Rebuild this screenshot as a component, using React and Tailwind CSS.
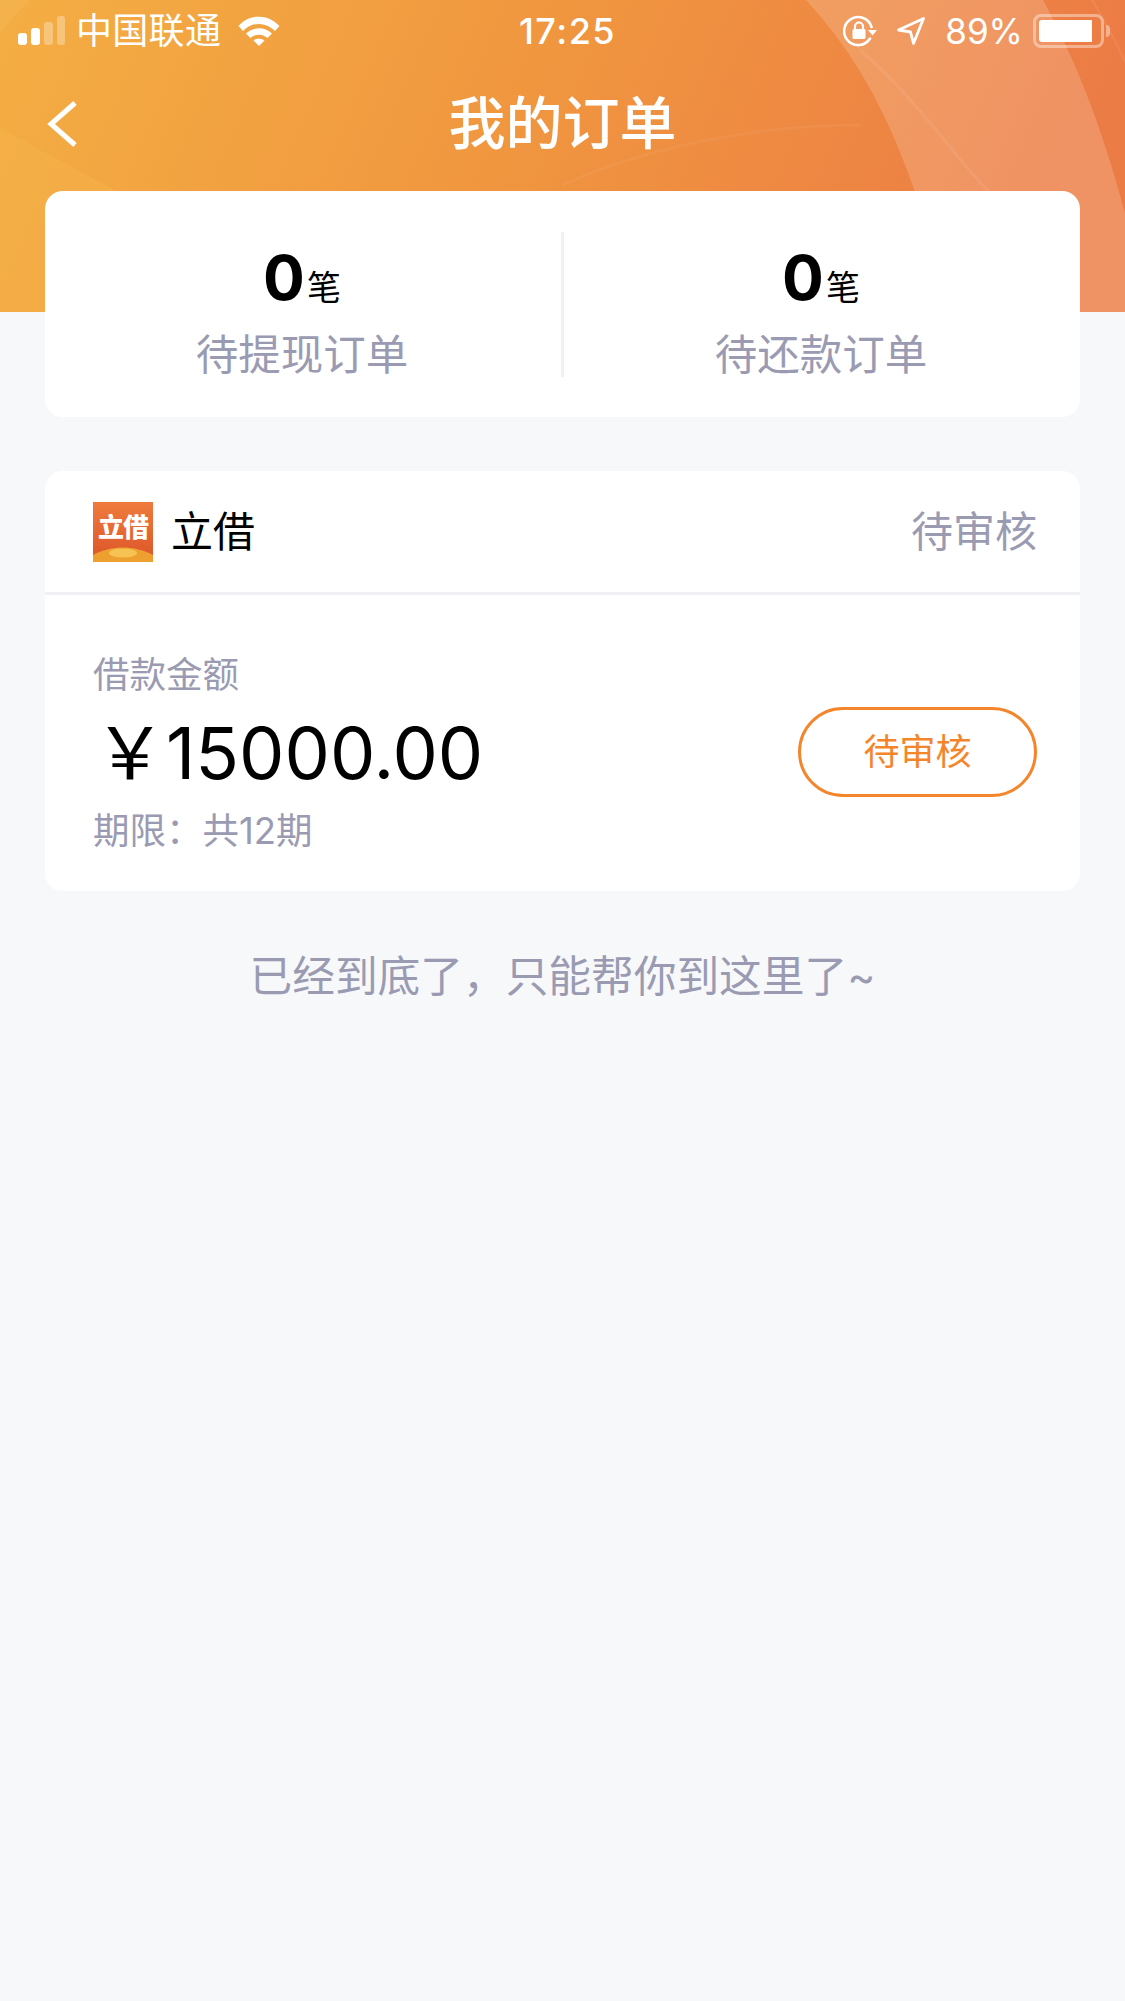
import React from 'react';

const FONT = "font-['Inter','Noto_Sans_CJK_SC',sans-serif]";

const HeaderArt = () => (
  <svg className="absolute inset-0 w-full h-full" viewBox="0 0 1125 312" preserveAspectRatio="none">
    <defs>
      <linearGradient id="hdr" x1="0" y1="0" x2="1" y2="0.12">
        <stop offset="0" stopColor="#f4ae43" />
        <stop offset="0.5" stopColor="#f0963f" />
        <stop offset="1" stopColor="#ec7c45" />
      </linearGradient>
    </defs>
    <rect width="1125" height="312" fill="url(#hdr)" />
    {/* left corner shapes */}
    <path d="M0 128 L118 192 L250 312 L0 312 Z" fill="#f7bb4e" fillOpacity="0.3" />
    <path d="M0 0 L30 0 L0 32 Z" fill="#ffffff" fillOpacity="0.05" />
    {/* big light band on the right */}
    <path d="M806 0 C860 60 905 130 950 312 L1125 312 L1125 213 C1100 120 1075 60 1043 0 Z" fill="#ffffff" fillOpacity="0.17" />
    <path d="M860 50 C930 110 975 190 1012 210" fill="none" stroke="#ffffff" strokeOpacity="0.07" strokeWidth="3" />
    <path d="M1092 0 C1105 20 1115 40 1125 62" fill="none" stroke="#ffffff" strokeOpacity="0.08" strokeWidth="2" />
    {/* thin line behind the title */}
    <path d="M562 185 C640 150 750 125 860 125" fill="none" stroke="#ffffff" strokeOpacity="0.05" strokeWidth="3" />
  </svg>
);

const Signal = () => (
  <svg width="48" height="30" viewBox="0 0 48 30" className="shrink-0">
    <rect x="0" y="17" width="9" height="12" rx="3" fill="#fff" />
    <rect x="13" y="12" width="9" height="17" rx="3" fill="#fff" />
    <rect x="26" y="6" width="9" height="23" rx="3" fill="#fff" fillOpacity="0.3" />
    <rect x="39" y="0" width="8" height="29" rx="3" fill="#fff" fillOpacity="0.3" />
  </svg>
);

const Wifi = () => (
  <svg width="42" height="30" viewBox="0 0 42 30" className="shrink-0">
    <path d="M0.5 10 C12 -2.5 30 -2.5 41.5 10 L37 15 C27.5 5.5 14.5 5.5 5 15 Z" fill="#fff" />
    <path d="M8 17.5 C15.5 10.5 26.5 10.5 34 17.5 L29.5 22 C24.5 17.5 17.5 17.5 12.5 22 Z" fill="#fff" />
    <path d="M15.5 24.5 C18.5 22 23.5 22 26.5 24.5 L21 30 Z" fill="#fff" />
  </svg>
);

const RotationLock = () => (
  <svg width="34" height="32" viewBox="0 0 34 32" className="shrink-0">
    <path d="M27 23.5 A14 14 0 1 1 28.5 12" fill="none" stroke="#fff" strokeWidth="2.6" strokeLinecap="round" />
    <path d="M25 15 L34 15 L29.5 20.5 Z" fill="#fff" />
    <rect x="9.5" y="14" width="13" height="10" rx="1.5" fill="#fff" />
    <path d="M12 14 V11.5 A4 4 0 0 1 20 11.5 V14" fill="none" stroke="#fff" strokeWidth="2.2" />
  </svg>
);

const Arrow = () => (
  <svg width="28" height="28" viewBox="0 0 28 28" className="shrink-0">
    <path d="M26.5 1.5 L1.5 13 L13.5 15 L16.5 26.5 Z" fill="none" stroke="#fff" strokeWidth="2.8" strokeLinejoin="round" />
  </svg>
);

const Battery = () => (
  <div className="flex items-center gap-[2px]">
    <div className="w-[71px] h-[34px] rounded-[8px] border-[3px] border-white/40 p-[3px]">
      <div className="w-[53px] h-full bg-white rounded-l-[3px]" />
    </div>
    <div className="w-[4px] h-[12px] bg-white/40 rounded-r-full" />
  </div>
);

const Logo = () => (
  <div className="relative w-[60px] h-[60px] shrink-0 overflow-hidden bg-gradient-to-b from-[#ee7b3d] to-[#dd5329] flex justify-center">
    <span className="mt-[11px] text-[26px] leading-[30px] font-black text-white tracking-[-1px]">立借</span>
    <svg className="absolute left-0 bottom-0" width="60" height="16" viewBox="0 0 60 16">
      <path d="M0 16 V9 C18 -1 42 -1 60 9 V16 Z" fill="#eda02f" />
      <ellipse cx="30" cy="7" rx="14" ry="4.5" fill="#f6c252" />
    </svg>
  </div>
);

const Stat = ({ label }) => (
  <div className="flex-1 flex flex-col items-center pt-[22px] pr-[2px]">
    <div className="flex items-end h-[60px]">
      <span className="text-[62px] leading-[60px] font-bold text-black">0</span>
      <span className="text-[34px] leading-[40px] ml-[2px] text-black">笔</span>
    </div>
    <span className="mt-[19px] text-[42.5px] leading-[56px] text-[#9a9bb2]">{label}</span>
  </div>
);

export default function App() {
  return (
    <div className={`${FONT} min-h-[2001px] bg-[#f7f8fa]`}>
      <header className="relative h-[312px] overflow-hidden text-white">
        <HeaderArt />
        <div className="relative grid grid-cols-[1fr_auto_1fr] items-center h-[62px] pl-[18px] pr-[15px]">
          <div className="flex items-center">
            <Signal />
            <span className="ml-[10px] text-[36px] leading-[44px] tracking-[0.3px]">中国联通</span>
            <span className="ml-[17px]"><Wifi /></span>
          </div>
          <span className="ml-[7px] text-[36px] leading-[44px] font-medium tracking-[1.5px]">17:25</span>
          <div className="flex items-center justify-end">
            <RotationLock />
            <span className="ml-[20px]"><Arrow /></span>
            <span className="ml-[20px] text-[35px] leading-[44px]">89%</span>
            <span className="ml-[10px]"><Battery /></span>
          </div>
        </div>
        <div className="relative grid grid-cols-[1fr_auto_1fr] items-center h-[124px] pl-[46px]">
          <svg width="32" height="48" viewBox="0 0 32 48">
            <path d="M29 3 L5 24 L29 45" fill="none" stroke="#fff" strokeWidth="5" />
          </svg>
          <h1 className="text-[57px] leading-[72px] font-medium -ml-[46px]">我的订单</h1>
          <div />
        </div>
      </header>

      <main className="relative -mt-[121px] px-[45px]">
        <section className="flex items-center h-[226px] bg-white rounded-[18px]">
          <Stat label="待提现订单" />
          <div className="w-[3px] h-[145px] bg-[#eef0f4]" />
          <Stat label="待还款订单" />
        </section>

        <section className="mt-[54px] bg-white rounded-[18px]">
          <div className="flex items-center justify-between h-[124px] pl-[48px] pr-[43px] border-b-[3px] border-[#f0f1f4]">
            <div className="flex items-center gap-[18px]">
              <Logo />
              <span className="text-[42px] leading-[56px] text-black">立借</span>
            </div>
            <span className="text-[42px] leading-[56px] text-[#9a9bb2]">待审核</span>
          </div>
          <div className="flex items-center justify-between h-[296px] pl-[48px] pr-[43px]">
            <div className="flex flex-col pt-[20px]">
              <span className="text-[36.5px] leading-[48px] text-[#9a9bb2]">借款金额</span>
              <span className="mt-[12px] ml-[1px] text-[72px] leading-[84px] text-black">￥15000.00</span>
              <span className="mt-[12px] text-[36.5px] leading-[48px] text-[#9a9bb2]">期限：共12期</span>
            </div>
            <button className="mt-[18px] w-[239px] h-[90px] rounded-full border-[3px] border-[#f5852a] text-[36px] text-[#f5852a]">待审核</button>
          </div>
        </section>

        <p className="mt-[56px] text-center text-[42.7px] leading-[60px] text-[#9a9bb2]">已经到底了，只能帮你到这里了~</p>
      </main>
    </div>
  );
}
